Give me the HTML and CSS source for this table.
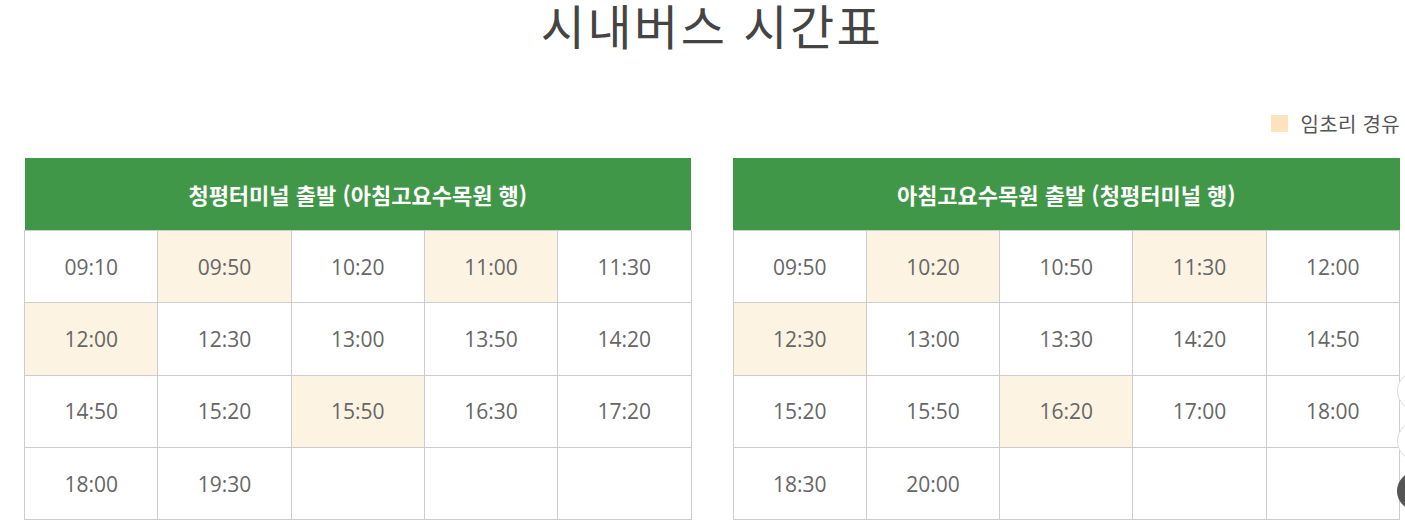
FILE: index.html
```html
<!DOCTYPE html>
<html lang="ko">
<head>
<meta charset="utf-8">
<title>시내버스 시간표</title>
<link rel="stylesheet" href="styles.css">
</head>
<body>
<div class="page">
  <h1 class="title">시내버스 시간표</h1>
  <div class="legend"><span class="legend-swatch"></span><span class="legend-text">임초리 경유</span></div>
  <div class="tables">
    <table class="timetable">
      <thead><tr><th colspan="5">청평터미널 출발 (아침고요수목원 행)</th></tr></thead>
      <tbody>
        <tr><td>09:10</td><td class="via">09:50</td><td>10:20</td><td class="via">11:00</td><td>11:30</td></tr>
        <tr><td class="via">12:00</td><td>12:30</td><td>13:00</td><td>13:50</td><td>14:20</td></tr>
        <tr><td>14:50</td><td>15:20</td><td class="via">15:50</td><td>16:30</td><td>17:20</td></tr>
        <tr><td>18:00</td><td>19:30</td><td></td><td></td><td></td></tr>
      </tbody>
    </table>
    <table class="timetable">
      <thead><tr><th colspan="5">아침고요수목원 출발 (청평터미널 행)</th></tr></thead>
      <tbody>
        <tr><td>09:50</td><td class="via">10:20</td><td>10:50</td><td class="via">11:30</td><td>12:00</td></tr>
        <tr><td class="via">12:30</td><td>13:00</td><td>13:30</td><td>14:20</td><td>14:50</td></tr>
        <tr><td>15:20</td><td>15:50</td><td class="via">16:20</td><td>17:00</td><td>18:00</td></tr>
        <tr><td>18:30</td><td>20:00</td><td></td><td></td><td></td></tr>
      </tbody>
    </table>
  </div>
</div>
<div class="float-buttons">
  <span class="fbtn"></span>
  <span class="fbtn"></span>
  <span class="fbtn dark"></span>
</div>
</body>
</html>
```
FILE: styles.css
```css
html, body {
  margin: 0;
  padding: 0;
  background: #fff;
}
body {
  font-family: "Noto Sans CJK KR", "Noto Sans", sans-serif;
  color: #555;
  overflow: hidden;
}
.page {
  padding: 0 5px 0 24px;
}
.title {
  margin: 0;
  padding-top: 2px;
  text-align: center;
  font-size: 48px;
  font-weight: 400;
  letter-spacing: 2.5px;
  line-height: 44px;
  color: #444;
}
.legend {
  display: flex;
  justify-content: flex-end;
  align-items: center;
  gap: 13px;
  margin-top: 62px;
  height: 30px;
}
.legend-swatch {
  width: 17px;
  height: 17px;
  background: #fce4bf;
}
.legend-text {
  font-size: 20px;
  letter-spacing: 0.3px;
  color: #555;
}
.tables {
  display: grid;
  grid-template-columns: 1fr 1fr;
  column-gap: 41px;
  margin-top: 20px;
}
.timetable {
  width: 100%;
  border-collapse: collapse;
  table-layout: fixed;
}
.timetable th {
  background: #3f9747;
  color: #fff;
  font-size: 22px;
  font-weight: 700;
  height: 72px;
  padding: 0;
}
.timetable td {
  border: 1px solid #ccc;
  height: 71.3px;
  padding: 0;
  text-align: center;
  font-family: "Open Sans", sans-serif;
  font-size: 21px;
  color: #666;
}
.timetable td.via {
  background: #fdf3e3;
}
.float-buttons {
  position: fixed;
  right: -32px;
  top: 371px;
  display: flex;
  flex-direction: column;
  gap: 10px;
}
.fbtn {
  width: 40px;
  height: 40px;
  border-radius: 50%;
  border: 1px solid #ddd;
  background: #fff;
  box-sizing: border-box;
}
.fbtn.dark {
  background: #555;
  border-color: #555;
}
```
